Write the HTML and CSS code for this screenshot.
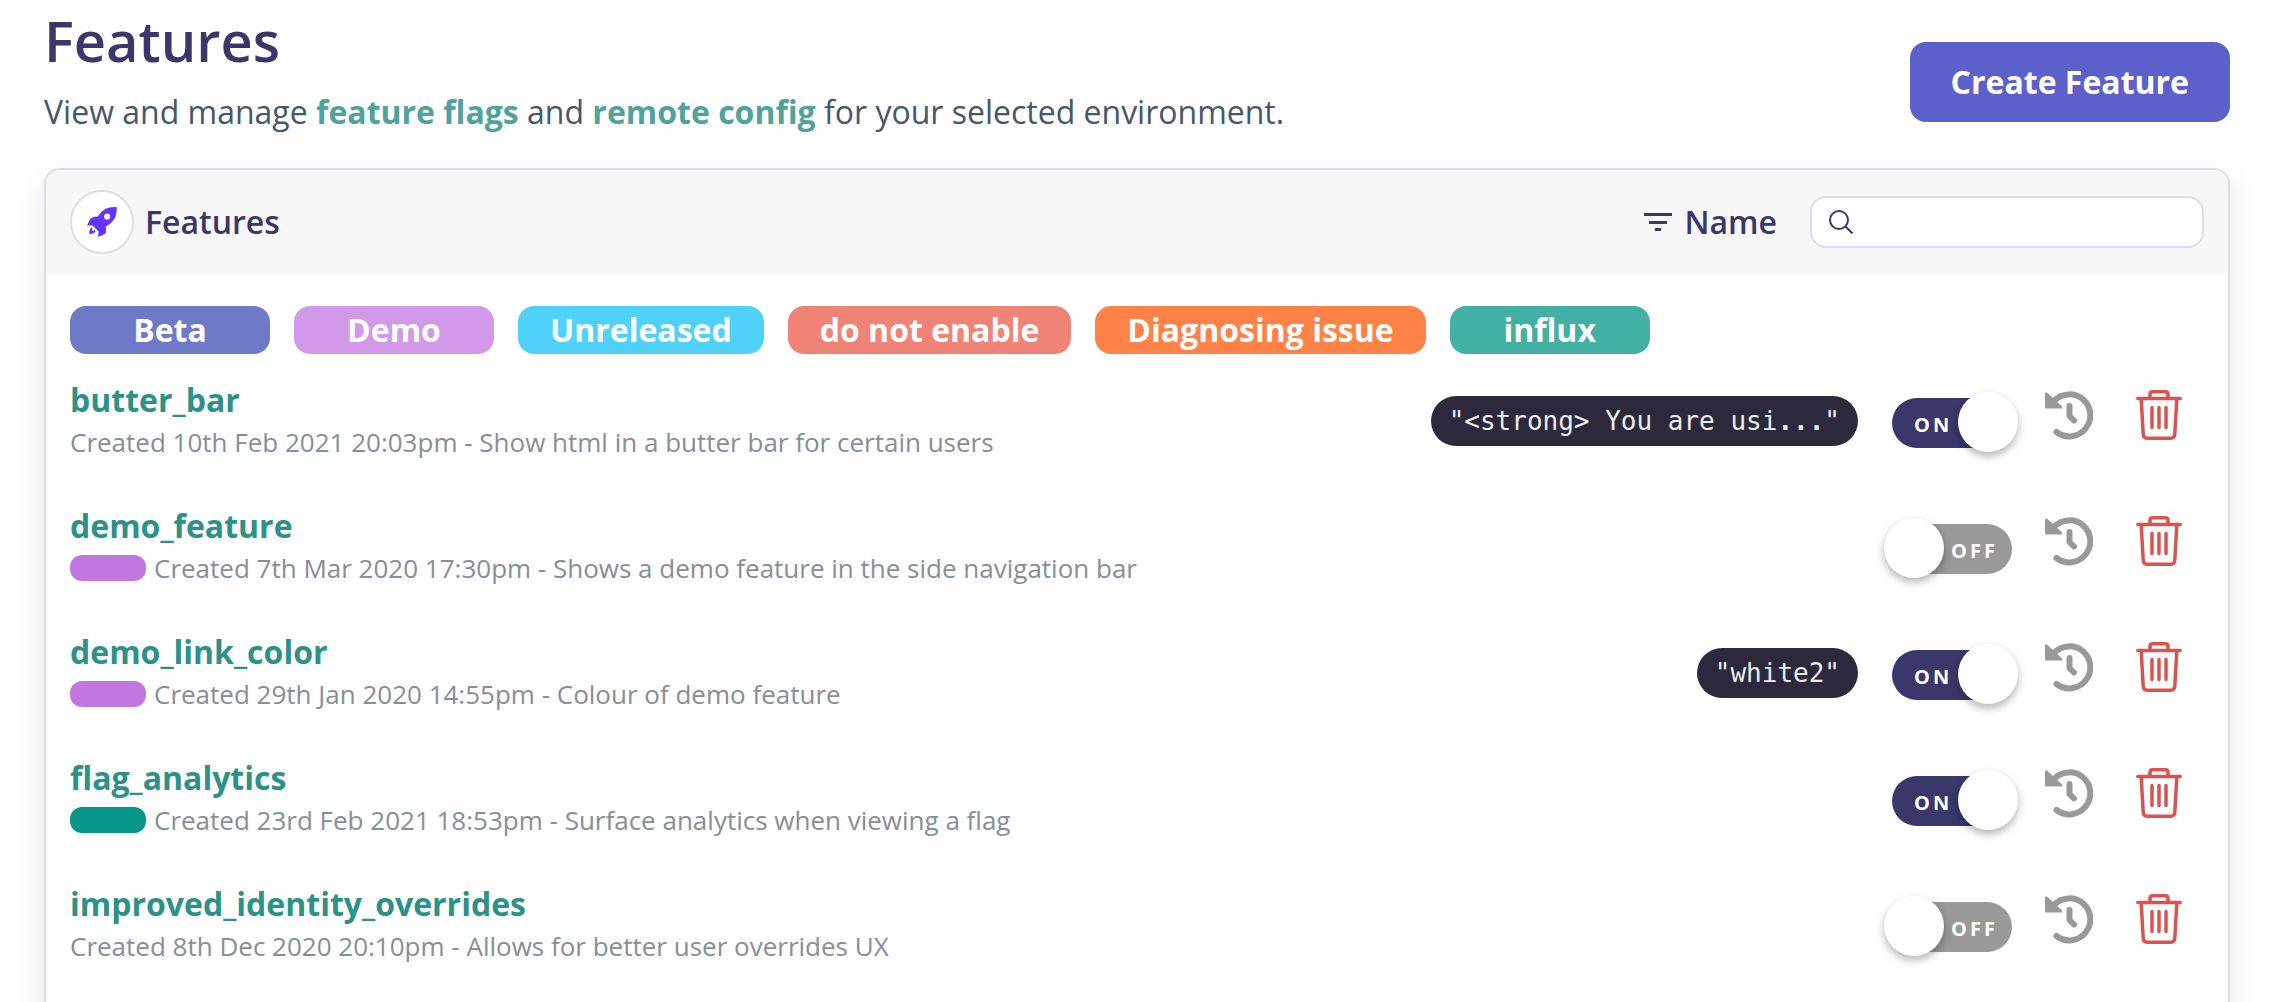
FILE: index.html
```html
<!DOCTYPE html>
<html lang="en">
<head>
<meta charset="utf-8">
<title>Features</title>
<link rel="stylesheet" href="styles.css">
</head>
<body>
<svg class="sprite" aria-hidden="true">
  <symbol id="i-history" viewBox="0 0 48 48"><path d="M9 10A21 21 0 1 1 11.500 41M24.500 15v10l4.500 4.500" fill="none" stroke="currentColor" stroke-width="6" stroke-linecap="round" stroke-linejoin="round"/><path d="M0 3Q0 0 2.500 2L17 15.500Q18 17.500 16 17.500H1.500Q0 17.500 0 16z" fill="currentColor"/></symbol>
  <symbol id="i-trash" viewBox="0 0 46 50"><g fill="none" stroke="currentColor" stroke-width="3.500" stroke-linecap="round" stroke-linejoin="round"><path d="M1.800 8.600h42.400M14 8V4.500q0-2.700 2.700-2.700h12.600q2.700 0 2.700 2.700V8M5.200 9l2 35q.3 4.200 4 4.200h23.600q3.700 0 4-4.200l2-35M16 17.500v20M23 17.500v20M30 17.500v20"/></g></symbol>
</svg>
<main class="page">
  <header class="page-head">
    <div>
      <h1 class="page-title">Features</h1>
      <p class="page-lead">View and manage <a href="#flags">feature flags</a> and <a href="#config">remote config</a> for your selected environment.</p>
    </div>
    <button class="btn-primary" type="button">Create Feature</button>
  </header>

  <section class="panel">
    <header class="panel-head">
      <span class="panel-icon"><svg viewBox="0 0 88 88" fill="#6633ff" aria-hidden="true"><path fill-rule="evenodd" d="M87 0C60-1 44 8 32 28C20 27 12 31 8 38L0 54Q8 53 16 54L34 72Q34 80 32 87Q44 85 54 78Q58 72 55 58C78 44 89 30 87 0ZM59 19a9 9 0 1 1 0 18a9 9 0 1 1 0-18zM12 60Q6 66 7 79Q20 80 25 71L22 66Q20 71 16 70Q13 66 17 62Z"/></svg></span>
      <h2 class="panel-title">Features</h2>
      <button class="sort" type="button">
        <svg viewBox="0 0 28 20" width="28" height="20" fill="currentColor" aria-hidden="true"><path d="M0 1h28v3H0zM5 9h18v3H5zM11 16h6v3h-6z"/></svg>
        Name
      </button>
      <label class="search">
        <svg viewBox="0 0 24 24" width="24" height="24" fill="none" stroke="currentColor" stroke-width="2" aria-hidden="true"><circle cx="10" cy="10" r="9"/><path d="M16.500 16.500l7 7"/></svg>
        <input type="search" aria-label="Search features">
      </label>
    </header>

    <div class="tags">
      <button class="tag tag-beta" type="button">Beta</button>
      <button class="tag tag-demo" type="button">Demo</button>
      <button class="tag tag-unreleased" type="button">Unreleased</button>
      <button class="tag tag-disabled" type="button">do not enable</button>
      <button class="tag tag-issue" type="button">Diagnosing issue</button>
      <button class="tag tag-influx" type="button">influx</button>
    </div>

    <ul class="list">
      <li class="row">
        <div class="info">
          <a class="name" href="#butter_bar">butter_bar</a>
          <p class="meta">Created 10th Feb 2021 20:03pm - Show html in a butter bar for certain users</p>
        </div>
        <code class="value">"&lt;strong&gt; You are usi<b>...</b>"</code>
        <label class="switch"><input type="checkbox" aria-label="butter_bar" checked><span class="on">ON</span><span class="off">OFF</span></label>
        <button class="icon history" type="button" aria-label="History"><svg><use href="#i-history"/></svg></button>
        <button class="icon trash" type="button" aria-label="Delete"><svg><use href="#i-trash"/></svg></button>
      </li>
      <li class="row">
        <div class="info">
          <a class="name" href="#demo_feature">demo_feature</a>
          <p class="meta"><span class="chip chip-demo"></span>Created 7th Mar 2020 17:30pm - Shows a demo feature in the side navigation bar</p>
        </div>
        <label class="switch"><input type="checkbox" aria-label="demo_feature"><span class="on">ON</span><span class="off">OFF</span></label>
        <button class="icon history" type="button" aria-label="History"><svg><use href="#i-history"/></svg></button>
        <button class="icon trash" type="button" aria-label="Delete"><svg><use href="#i-trash"/></svg></button>
      </li>
      <li class="row">
        <div class="info">
          <a class="name" href="#demo_link_color">demo_link_color</a>
          <p class="meta"><span class="chip chip-demo"></span>Created 29th Jan 2020 14:55pm - Colour of demo feature</p>
        </div>
        <code class="value">"white2"</code>
        <label class="switch"><input type="checkbox" aria-label="demo_link_color" checked><span class="on">ON</span><span class="off">OFF</span></label>
        <button class="icon history" type="button" aria-label="History"><svg><use href="#i-history"/></svg></button>
        <button class="icon trash" type="button" aria-label="Delete"><svg><use href="#i-trash"/></svg></button>
      </li>
      <li class="row">
        <div class="info">
          <a class="name" href="#flag_analytics">flag_analytics</a>
          <p class="meta"><span class="chip chip-influx"></span>Created 23rd Feb 2021 18:53pm - Surface analytics when viewing a flag</p>
        </div>
        <label class="switch"><input type="checkbox" aria-label="flag_analytics" checked><span class="on">ON</span><span class="off">OFF</span></label>
        <button class="icon history" type="button" aria-label="History"><svg><use href="#i-history"/></svg></button>
        <button class="icon trash" type="button" aria-label="Delete"><svg><use href="#i-trash"/></svg></button>
      </li>
      <li class="row">
        <div class="info">
          <a class="name" href="#improved_identity_overrides">improved_identity_overrides</a>
          <p class="meta">Created 8th Dec 2020 20:10pm - Allows for better user overrides UX</p>
        </div>
        <label class="switch"><input type="checkbox" aria-label="improved_identity_overrides"><span class="on">ON</span><span class="off">OFF</span></label>
        <button class="icon history" type="button" aria-label="History"><svg><use href="#i-history"/></svg></button>
        <button class="icon trash" type="button" aria-label="Delete"><svg><use href="#i-trash"/></svg></button>
      </li>
    </ul>
  </section>
</main>
</body>
</html>
```
FILE: styles.css
```css
* { box-sizing: border-box; }

body {
  margin: 0;
  background: #fff;
  color: #3a376b;
  font-family: "Open Sans", "Noto Sans", sans-serif;
  font-size: 32px;
  line-height: 44px;
}

h1, h2, p, ul { margin: 0; padding: 0; }
a { text-decoration: none; }
button { margin: 0; padding: 0; border: 0; background: none; color: inherit; font: inherit; cursor: pointer; }
svg { display: block; }
.sprite { position: absolute; width: 0; height: 0; }

.page { padding: 0 62px 0 44px; }

.page-head { display: flex; justify-content: space-between; align-items: flex-start; height: 168px; }
.page-title { font-size: 56px; line-height: 80px; font-weight: 600; }
.page-lead { margin-top: 10px; color: #46566b; }
.page-lead a { color: #4fa39b; font-weight: 700; }

.btn-primary {
  height: 80px;
  margin-top: 42px;
  padding: 0 41px;
  border-radius: 16px;
  background: #5d5fcb;
  color: #fff;
  font-weight: 700;
}

.panel {
  border: 2px solid #d8dee3;
  border-radius: 16px;
  background: #fff;
  box-shadow: 0 12px 28px rgba(60, 80, 100, 0.14);
}

.panel-head {
  display: flex;
  align-items: center;
  height: 104px;
  padding: 0 24px;
  border-radius: 14px 14px 0 0;
  background: #f7f7f7;
}
.panel-icon {
  display: grid;
  place-items: center;
  width: 64px;
  height: 64px;
  border: 2px solid #dedede;
  border-radius: 50%;
  background: #fff;
}
.panel-icon svg { width: 30px; height: 30px; }
.panel-title { margin-left: 11px; font-size: 32px; font-weight: 600; }

.sort { display: flex; align-items: center; gap: 12px; margin-left: auto; font-weight: 600; }

.search {
  display: flex;
  align-items: center;
  width: 394px;
  height: 52px;
  margin-left: 33px;
  padding: 0 17px;
  border: 2px solid #d8dee3;
  border-radius: 16px;
  background: #fff;
}
.search svg { flex: none; }
.search input {
  flex: 1;
  min-width: 0;
  margin-left: 12px;
  padding: 0;
  border: 0;
  outline: 0;
  background: none;
  font: inherit;
  font-size: 26px;
}

.tags { display: flex; flex-wrap: wrap; gap: 24px; padding: 32px 24px 20px; }
.tag {
  min-width: 200px;
  height: 48px;
  padding: 0 32px;
  border-radius: 16px;
  color: #fff;
  font-weight: 700;
}
.tag-beta { background: #6e79c8; }
.tag-demo { background: #d299e8; }
.tag-unreleased { background: #50d1f9; }
.tag-disabled { background: #ef8375; }
.tag-issue { background: #ff8248; }
.tag-influx { background: #43b0a5; }

.list { padding-bottom: 24px; list-style: none; }
.row { display: flex; align-items: flex-start; height: 126px; padding: 4px 46px 0 24px; }
.info { flex: 1; }
.name { display: block; color: #2c9187; font-weight: 700; }
.meta { display: flex; align-items: center; height: 40px; color: #868e96; font-size: 26px; line-height: 40px; }
.chip { width: 76px; height: 26px; margin-right: 8px; border-radius: 12px; }
.chip-demo { background: #c277e0; }
.chip-influx { background: #069688; }

.value {
  height: 50px;
  margin: 18px 34px 0 0;
  padding: 0 18px;
  border-radius: 25px;
  background: #2d293d;
  color: #ececec;
  font-family: "DejaVu Sans Mono", monospace;
  font-size: 26px;
  line-height: 50px;
}

.switch {
  position: relative;
  width: 120px;
  height: 50px;
  margin-top: 20px;
  color: #fff;
  font-size: 20px;
  font-weight: 700;
  line-height: 54px;
  letter-spacing: 3px;
}
.switch input {
  appearance: none;
  width: 120px;
  height: 50px;
  margin: 0;
  border-radius: 25px;
  background: #999;
}
.switch input:checked { background: #3a376b; }
.switch input::before {
  content: "";
  position: absolute;
  top: -6px;
  left: -8px;
  width: 60px;
  height: 60px;
  border-radius: 50%;
  background: #fff;
  box-shadow: 0 4px 8px rgba(0, 0, 0, 0.3);
}
.switch input:checked::before { left: 66px; }
.switch span { position: absolute; top: 0; }
.switch .on { left: 22px; display: none; }
.switch .off { left: 59px; }
.switch input:checked ~ .on { display: block; }
.switch input:checked ~ .off { display: none; }

.icon { margin-top: 12px; }
.history { margin-left: 33px; color: #999; }
.history svg { width: 48px; height: 50px; }
.trash { margin-left: 43px; color: #d9534f; }
.trash svg { width: 46px; height: 50px; }
```
